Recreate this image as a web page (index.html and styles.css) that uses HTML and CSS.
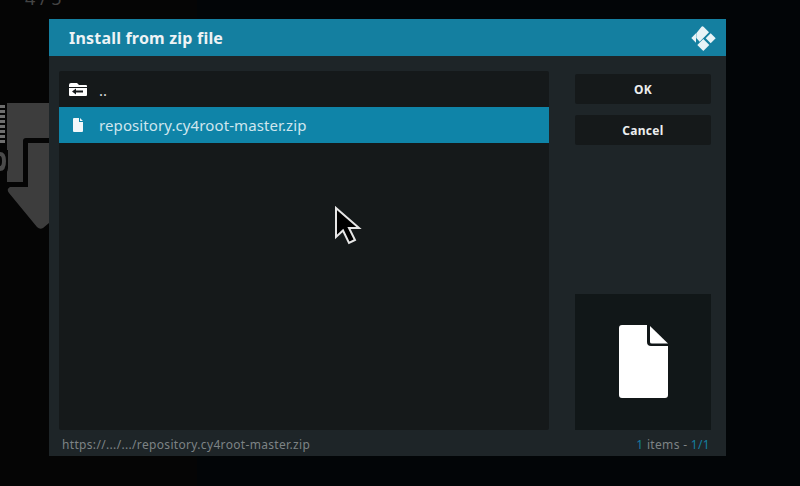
FILE: index.html
```html
<!DOCTYPE html>
<html lang="en">
<head>
    <meta charset="UTF-8">
    <title>Install from zip file</title>
    <link rel="stylesheet" href="styles.css">
</head>
<body>
    <div class="backdrop">
        <div class="page-count">4 / 5</div>
        <svg class="addon-art" width="49" height="140" viewBox="0 0 49 140">
            <path d="M7 13H49V133L43 138Q40 140 37 137L9 103Q6 99 10 97H7Z" fill="#3d3d3d"/>
            <path d="M0 15H5V18H0ZM0 20H5V23H0ZM0 25H5V28H0ZM0 30H5V33H0ZM0 35H5V38H0ZM0 40H5V43H0ZM0 45H5V48H0ZM0 50H5V53H0Z" fill="#6e6e6e"/>
            <path d="M49 48H26Q23 48 23 51V92H3V97H28V53H49Z" fill="#050505"/>
            <path d="M0 57H7V60H8V78Q8 84 0 84Z" fill="#050505"/>
            <path d="M0 62Q6 62 6 71Q6 81 0 81V76Q2 76 2 71Q2 66 0 66Z" fill="#4a4a4a"/>
        </svg>
    </div>

    <div class="dialog">
        <div class="dialog-header">
            <span class="dialog-title">Install from zip file</span>
            <svg class="kodi-logo" width="26" height="26" viewBox="0 0 26 26">
                <path d="M.3 12L5 7.300V16.700Z" fill="#e8f3f6"/>
                <path d="M5.300 7.300L10.300 1Q11.300 -.5 12.800 1L18 6.300L8.700 15.700L5.300 12Z" fill="#e8f3f6"/>
                <path d="M19.700 7.300L24.700 12.300L19.700 17.300L14.700 12.300Z" fill="#e8f3f6"/>
                <path d="M12.300 13L18.300 19L12.300 25L6.300 19Z" fill="#e8f3f6"/>
            </svg>
        </div>
        <div class="dialog-body">
            <div class="file-list">
                <div class="file-row">
                    <svg class="row-icon" width="20" height="15" viewBox="0 0 20 15">
                        <path d="M3 1H9L11 3H18Q19 3 19 4V5H1V3Q1 1 3 1ZM1 6H19V13Q19 14 18 14H2Q1 14 1 13Z" fill="#fff"/>
                        <path d="M4 9.500L8 6.500V8.500H15V10.500H8V12.500Z" fill="#15191a"/>
                    </svg>
                    <span class="parent-label">..</span>
                </div>
                <div class="file-row selected">
                    <svg class="row-icon" width="20" height="14" viewBox="0 0 20 14">
                        <path d="M5 1Q5 0 6 0H11V4H15V13Q15 14 14 14H6Q5 14 5 13ZM12 0L15 3H12Z" fill="#f2f7f9"/>
                    </svg>
                    <span>repository.cy4root-master.zip</span>
                </div>
            </div>
            <div class="side">
                <button class="side-btn">OK</button>
                <button class="side-btn">Cancel</button>
                <div class="preview">
                    <svg class="preview-icon" width="50" height="74" viewBox="0 0 50 74">
                        <path d="M0 3Q0 0 3 0H28V17Q28 21 32 21H49V70Q49 73 46 73H3Q0 73 0 70Z" fill="#fff"/>
                        <path d="M31 1L49 18.500H33Q31 18.500 31 17Z" fill="#fff"/>
                    </svg>
                </div>
            </div>
        </div>
        <div class="dialog-footer">
            <span>https://.../.../repository.cy4root-master.zip</span>
            <span><span class="accent">1</span> items - <span class="accent">1/1</span></span>
        </div>
    </div>

    <svg class="cursor" width="28" height="40" viewBox="0 0 28 40">
        <path d="M2 2V31L9 24.500L15 37L21 34L15 22H25Z" fill="#000" stroke="#e6e6e6" stroke-width="2"/>
    </svg>
</body>
</html>
```

FILE: styles.css
```css
html, body {
    height: 100%;
}
body {
    margin: 0;
    background-color: #020507;
    font-family: "Noto Sans", sans-serif;
    overflow: hidden;
    position: relative;
    padding-top: 19px;
    box-sizing: border-box;
}
.backdrop {
    position: absolute;
    left: 0;
    top: 0;
    width: 197px;
    height: 100%;
    background-color: #050505;
}
.page-count {
    position: absolute;
    left: 25px;
    top: -14px;
    font-size: 18px;
    color: #444;
}
.addon-art {
    position: absolute;
    left: 0;
    top: 90px;
}
.dialog {
    position: relative;
    width: 677px;
    height: 437px;
    margin-left: 49px;
    background-color: #1e2528;
    display: flex;
    flex-direction: column;
}
.dialog-header {
    height: 37px;
    flex: none;
    background-color: #147fa0;
    display: flex;
    align-items: center;
    justify-content: space-between;
    padding: 0 9px 0 20px;
}
.dialog-title {
    color: #eef3f5;
    font-size: 16px;
    font-weight: 700;
    letter-spacing: 0.2px;
}
.kodi-logo {
    margin-top: 3px;
}
.dialog-body {
    flex: 1;
    display: flex;
    padding: 15px 15px 0 10px;
    min-height: 0;
}
.file-list {
    width: 490px;
    background-color: #15191a;
    border-radius: 2px;
}
.file-row {
    height: 36px;
    display: flex;
    align-items: center;
    color: #d5d9da;
    font-size: 15px;
    letter-spacing: 0.1px;
}
.row-icon {
    margin-left: 9px;
    margin-right: 11px;
}
.parent-label {
    padding-top: 2px;
}
.selected {
    background-color: #0f84a8;
    color: #cfe6ee;
}
.side {
    margin-left: 26px;
    width: 136px;
    display: flex;
    flex-direction: column;
    padding-top: 3px;
}
.side-btn {
    height: 30px;
    margin-bottom: 11px;
    border: none;
    border-radius: 2px;
    background-color: #15191a;
    color: #eceeef;
    font-family: "Noto Sans", sans-serif;
    font-size: 12px;
    font-weight: 700;
    letter-spacing: 0.3px;
}
.preview {
    margin-top: auto;
    height: 136px;
    background-color: #111718;
    display: flex;
    align-items: center;
    justify-content: center;
}
.preview-icon {
    margin-left: 2px;
}
.dialog-footer {
    height: 26px;
    flex: none;
    display: flex;
    align-items: center;
    justify-content: space-between;
    padding: 2px 16px 0 13px;
    box-sizing: border-box;
    color: #7d8385;
    font-size: 12px;
    letter-spacing: 0.33px;
}
.accent {
    color: #147fa0;
}
.cursor {
    position: absolute;
    left: 334px;
    top: 206px;
}
```
